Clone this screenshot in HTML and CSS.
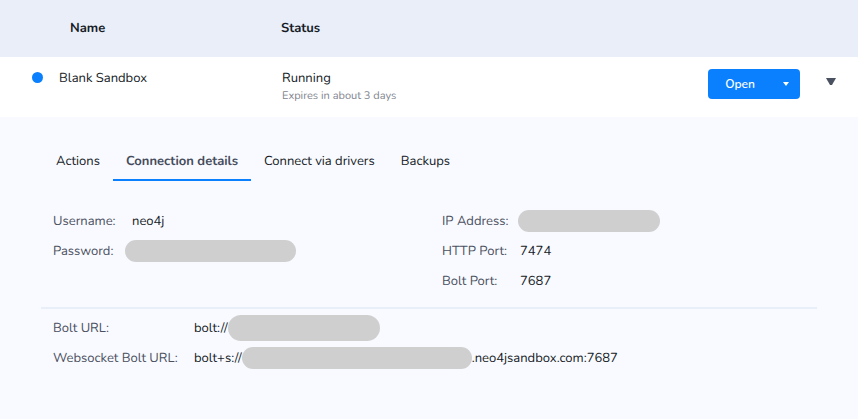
FILE: index.html
```html
<!DOCTYPE html>
<html lang="en">
<head>
<meta charset="utf-8">
<title>Sandboxes</title>
<link rel="stylesheet" href="styles.css">
</head>
<body>
<table class="sandboxes">
  <thead>
    <tr><th class="col-name" scope="col">Name</th><th class="col-status" scope="col">Status</th><td class="col-actions"></td></tr>
  </thead>
  <tbody>
    <tr>
      <td><div class="name"><span class="dot"></span>Blank Sandbox</div></td>
      <td class="status">Running<small class="expiry">Expires in about 3 days</small></td>
      <td>
        <div class="actions">
          <div class="split">
            <button class="open" type="button">Open</button>
            <button class="more" type="button" aria-label="More ways to open"><svg width="8" height="4" viewBox="0 0 8 4"><path d="M1 0h6L4 4z" fill="currentColor"/></svg></button>
          </div>
          <button class="toggle" type="button" aria-label="Collapse details"><svg width="10" height="8" viewBox="0 0 10 8"><path d="M0 0h10L6 7H4z" fill="currentColor"/></svg></button>
        </div>
      </td>
    </tr>
  </tbody>
</table>
<main class="details">
  <nav class="tabs">
    <a class="tab" href="#actions">Actions</a>
    <a class="tab active" href="#connection" aria-current="page">Connection details</a>
    <a class="tab" href="#drivers">Connect via drivers</a>
    <a class="tab" href="#backups">Backups</a>
  </nav>
  <div class="groups">
    <dl class="fields credentials">
      <dt>Username:</dt><dd class="text">neo4j</dd>
      <dt>Password:</dt><dd><span class="mask mask-password"></span></dd>
    </dl>
    <dl class="fields ports">
      <dt>IP Address:</dt><dd><span class="mask mask-ip"></span></dd>
      <dt>HTTP Port:</dt><dd class="text">7474</dd>
      <dt>Bolt Port:</dt><dd class="text">7687</dd>
    </dl>
  </div>
  <dl class="fields urls">
    <dt>Bolt URL:</dt><dd>bolt://<span class="mask mask-bolt"></span></dd>
    <dt>Websocket Bolt URL:</dt><dd>bolt+s://<span class="mask mask-socket"></span>.neo4jsandbox.com:7687</dd>
  </dl>
</main>
</body>
</html>
```
FILE: styles.css
```css
* { box-sizing: border-box; }
body {
  margin: 0;
  background: #f9faff;
  color: #151b26;
  font: 13px/20px Nunito, Lato, sans-serif;
  text-rendering: geometricPrecision;
}
button { border: 0; padding: 0; font: inherit; cursor: pointer; }
svg { display: block; }

.sandboxes { width: 100%; border-collapse: collapse; table-layout: fixed; }
.sandboxes thead { background: #e9eef8; }
.sandboxes tbody { background: #fff; }
.sandboxes th { height: 57px; padding: 0 0 2px; text-align: left; font-weight: 700; }
.sandboxes td { padding: 0; vertical-align: top; }
.sandboxes tbody td { height: 60px; padding-top: 11px; }
.sandboxes .col-name { width: 281px; padding-left: 70px; }
.sandboxes .status { padding-left: 1px; }
.col-actions { width: 180px; }
.name { display: flex; align-items: center; gap: 16px; padding-left: 32px; }
.dot { width: 11px; height: 11px; margin-bottom: 2px; border-radius: 50%; background: #0a80ff; }
.expiry { display: block; font-size: 11px; line-height: 16px; color: #7f848e; }
.actions { display: flex; justify-content: flex-end; align-items: flex-start; gap: 26px; padding: 1px 22px 0 0; }
.split { display: flex; height: 30px; border-radius: 4px; overflow: hidden; }
.split button { background: #0a80ff; color: #fff; }
.open { width: 64px; font-size: 12px; font-weight: 600; }
.more { display: grid; place-items: center; width: 28px; }
.toggle { padding-top: 9px; background: none; color: #4a5160; }

.details { padding: 24px 41px 46px; }
.tabs { display: flex; padding-left: 2px; }
.tab {
  padding: 10px 13px 8px;
  border-bottom: 2px solid transparent;
  color: inherit;
  text-decoration: none;
}
.tab.active { border-color: #0a80ff; color: #464c5c; font-weight: 700; }

.groups { display: grid; grid-template-columns: 1fr 1fr; column-gap: 2px; padding: 25px 0 11px; border-bottom: 2px solid #e9eff8; }
.fields { display: grid; grid-auto-rows: 30px; align-content: start; align-items: center; margin: 0; padding-left: 12px; }
.fields dt { color: #4a5060; }
.fields dd { display: flex; align-items: center; margin: 0; }
.credentials { grid-template-columns: 72px 1fr; }
.credentials .text { padding-left: 7px; }
.ports { grid-template-columns: 76px 1fr; }
.ports .text { padding-left: 2px; }
.urls { grid-template-columns: 141px 1fr; padding-top: 4px; }

.mask { height: 22px; border-radius: 13px; background: #cfcfcf; }
.mask-password { width: 171px; }
.mask-ip { width: 142px; }
.mask-bolt { width: 152px; height: 26px; }
.mask-socket { width: 230px; }
```
